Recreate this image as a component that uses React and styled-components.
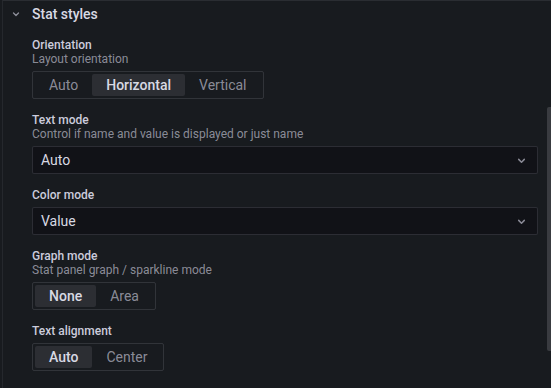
import React, { useState } from "react";
import styled, { createGlobalStyle } from "styled-components";

const GlobalStyle = createGlobalStyle`
  html, body {
    margin: 0;
    padding: 0;
    background: #181b1f;
    font-family: Roboto, "Noto Sans", sans-serif;
    color: #ccccdc;
  }
  * { box-sizing: border-box; }
`;

const Page = styled.div`
  position: relative;
  width: 551px;
  height: 388px;
  overflow: hidden;
  background: #181b1f;
  padding-left: 2px;
`;

const Panel = styled.div`
  height: 100%;
  border-left: 1px solid #25282d;
  border-top: 1px solid #2a2d32;
`;

const Header = styled.div`
  height: 26px;
  display: flex;
  align-items: center;
  gap: 12px;
  padding-left: 9px;
  font-size: 14px;
  font-weight: 500;
  color: #d8d9e3;
`;

const Caret = styled.span`
  width: ${(p) => p.$width || "auto"};
  display: flex;
  justify-content: center;
  color: rgba(204, 204, 220, 0.65);
`;

const Body = styled.div`
  padding: 11px 13px 0 29px;
`;

const Field = styled.div`
  margin-bottom: 14px;
`;

const LabelBlock = styled.div`
  margin-bottom: 5px;
`;

const Label = styled.div`
  font-size: 12px;
  line-height: 14px;
  font-weight: 500;
  color: #ccccdc;
`;

const Description = styled.div`
  font-size: 12px;
  line-height: 14px;
  color: rgba(204, 204, 220, 0.65);
`;

const RadioGroup = styled.div`
  display: inline-flex;
  height: 28px;
  padding: 2px;
  border: 1px solid rgba(204, 204, 220, 0.14);
  border-radius: 2px;
`;

const RadioButton = styled.button`
  height: 22px;
  padding: 0 14px;
  border: none;
  border-radius: 2px;
  font-family: inherit;
  font-size: 14px;
  font-weight: ${(p) => (p.$active ? 500 : 400)};
  color: ${(p) => (p.$active ? "#d8d9e3" : "rgba(204, 204, 220, 0.65)")};
  background: ${(p) => (p.$active ? "#2c2e33" : "transparent")};
  cursor: pointer;
`;

const Select = styled.div`
  height: 28px;
  display: flex;
  align-items: center;
  justify-content: space-between;
  padding: 0 11px 0 8px;
  background: #111217;
  border: 1px solid rgba(204, 204, 220, 0.15);
  border-radius: 2px;
  font-size: 14px;
  color: #d8d9e3;
`;

const Scrollbar = styled.div`
  position: absolute;
  right: 0;
  top: 107px;
  width: 4px;
  height: 244px;
  background: #393b40;
  border-radius: 2px 0 0 2px;
`;

const Chevron = ({ size = 8 }) => (
  <svg width={size} height={size} viewBox="0 0 8 8" fill="none">
    <polyline
      points="1.5,3 4,5.5 6.5,3"
      stroke="currentColor"
      strokeWidth="1.3"
      strokeLinecap="round"
      strokeLinejoin="round"
    />
  </svg>
);

function Radio({ options, initial }) {
  const [value, setValue] = useState(initial);
  return (
    <RadioGroup>
      {options.map((o) => (
        <RadioButton key={o} $active={o === value} onClick={() => setValue(o)}>
          {o}
        </RadioButton>
      ))}
    </RadioGroup>
  );
}

function SelectBox({ value }) {
  return (
    <Select>
      <span>{value}</span>
      <Caret>
        <Chevron size={9} />
      </Caret>
    </Select>
  );
}

export default function App() {
  return (
    <Page>
      <GlobalStyle />
      <Panel>
        <Header>
          <Caret $width="8px">
            <Chevron size={8} />
          </Caret>
          Stat styles
        </Header>
        <Body>
          <Field>
            <LabelBlock>
              <Label>Orientation</Label>
              <Description>Layout orientation</Description>
            </LabelBlock>
            <Radio options={["Auto", "Horizontal", "Vertical"]} initial="Horizontal" />
          </Field>
          <Field>
            <LabelBlock>
              <Label>Text mode</Label>
              <Description>Control if name and value is displayed or just name</Description>
            </LabelBlock>
            <SelectBox value="Auto" />
          </Field>
          <Field>
            <LabelBlock>
              <Label>Color mode</Label>
            </LabelBlock>
            <SelectBox value="Value" />
          </Field>
          <Field>
            <LabelBlock>
              <Label>Graph mode</Label>
              <Description>Stat panel graph / sparkline mode</Description>
            </LabelBlock>
            <Radio options={["None", "Area"]} initial="None" />
          </Field>
          <Field>
            <LabelBlock>
              <Label>Text alignment</Label>
            </LabelBlock>
            <Radio options={["Auto", "Center"]} initial="Auto" />
          </Field>
        </Body>
      </Panel>
      <Scrollbar />
    </Page>
  );
}
